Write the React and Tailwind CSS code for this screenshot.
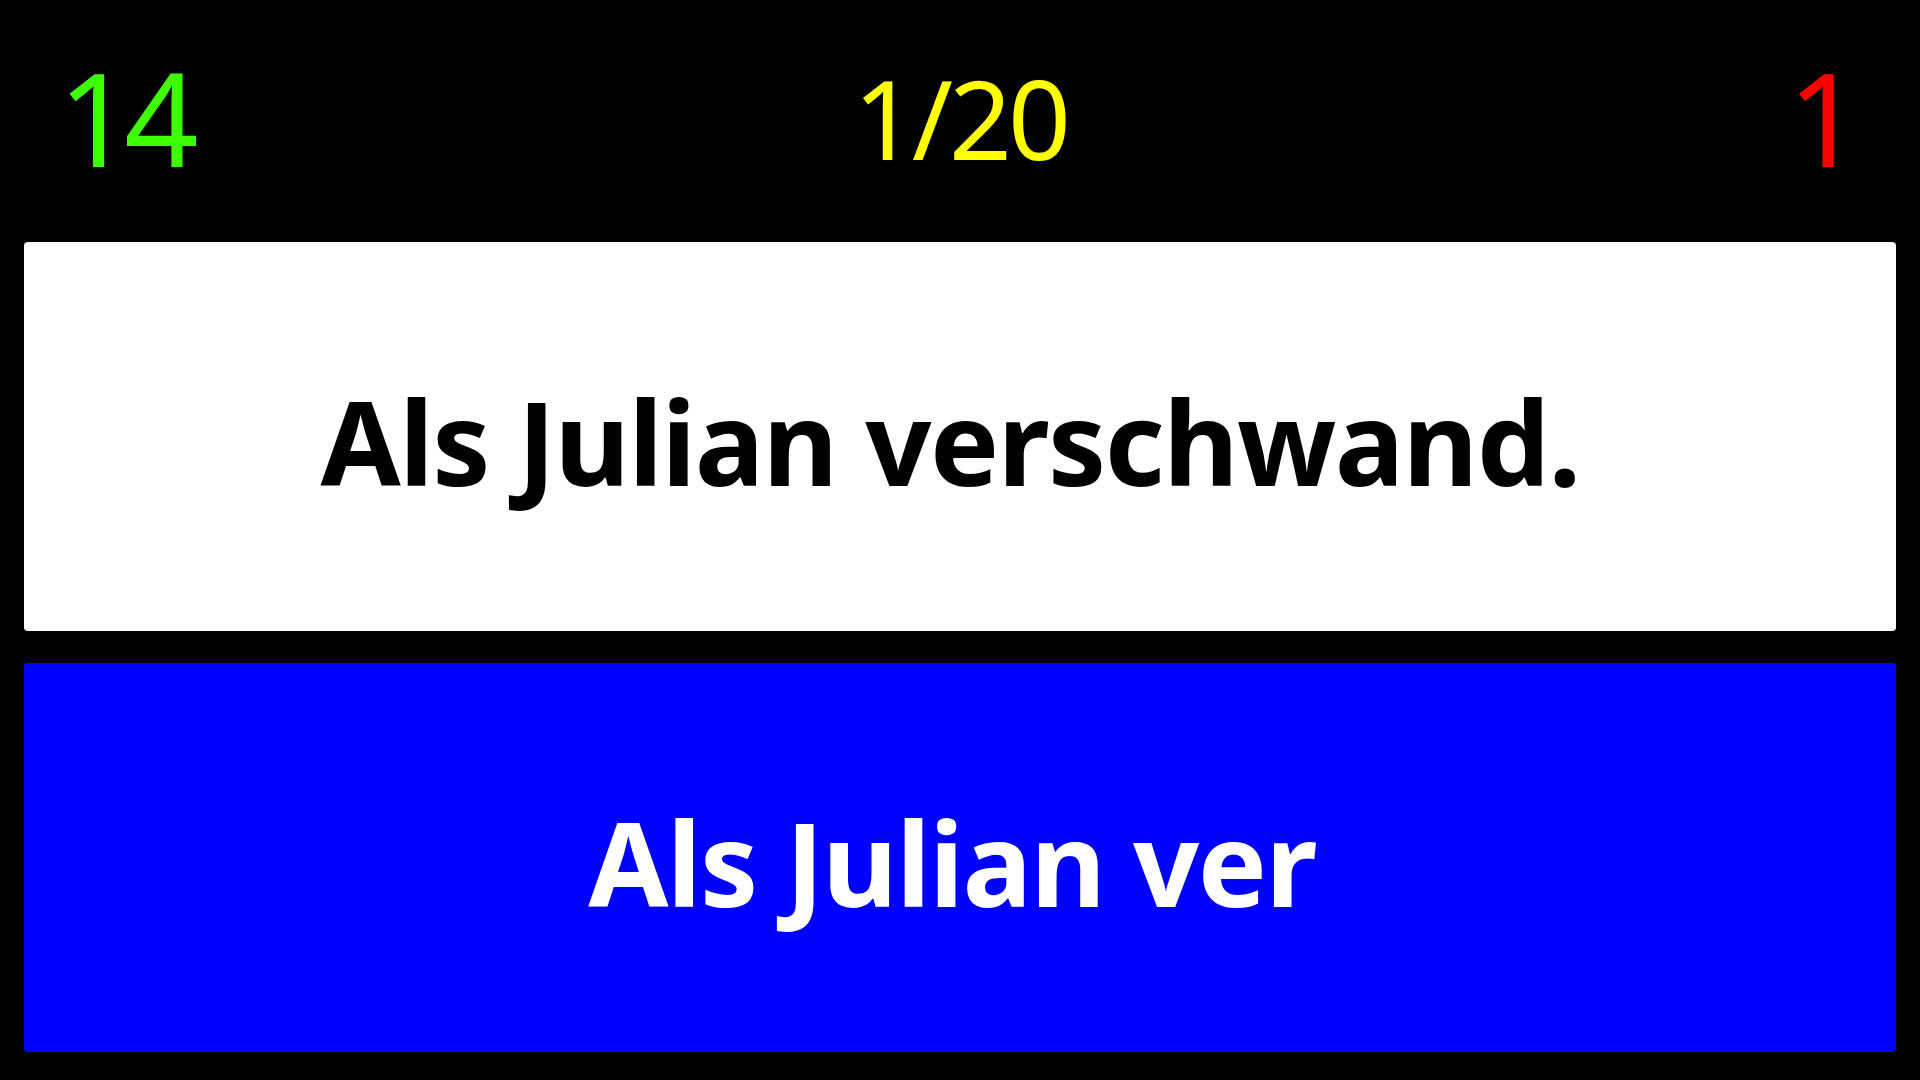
import React from 'react';

export default function App() {
	const font = { fontFamily: '"Noto Sans", "Open Sans", sans-serif' };

	return (
		<div className="w-[1920px] h-[1080px] bg-black flex flex-col overflow-hidden" style={font}>
			<div className="h-[242px] grid grid-cols-3 items-center px-[58px] pb-2 leading-none">
				<div className="text-[130px] text-[#3dff00] tracking-[-8px]">14</div>
				<div className="text-[110px] text-[#ffff00] text-center tracking-[-4px]">1/20</div>
				<div className="text-[130px] text-[#ff0000] text-right">1</div>
			</div>
			<div className="flex-1 flex flex-col gap-8 px-6 pb-7">
				<div className="flex-1 bg-white rounded-[4px] flex items-center justify-center pt-2 pr-5">
					<span className="text-[116px] font-bold text-black leading-none tracking-[-1.5px]">Als Julian verschwand.</span>
				</div>
				<div className="flex-1 bg-[#0000ff] rounded-[4px] flex items-center justify-center pt-2 pr-4">
					<span className="text-[116px] font-bold text-white leading-none tracking-[-1.5px]">Als Julian ver</span>
				</div>
			</div>
		</div>
	);
}
